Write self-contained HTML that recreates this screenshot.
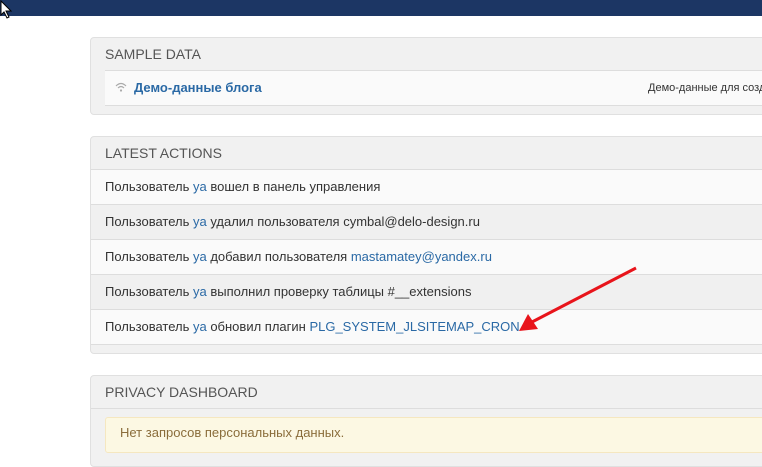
<!DOCTYPE html><html><head><meta charset="utf-8"><style>
body{margin:0;width:762px;height:447px;overflow:hidden;background:#fff;font-family:"Liberation Sans",Arial,sans-serif;position:relative}
.top{position:absolute;left:0;top:0;width:762px;height:16px;background:#1c3664}
.panel{position:absolute;left:90px;width:690px;background:#f1f1f1;border:1px solid #e0e0e0;border-radius:4px}
.h{font-size:14px;color:#555;padding:0 0 0 14px;height:32px;line-height:32px}
.row{height:34px;line-height:34px;border-top:1px solid #ddd;font-size:13px;color:#333;padding-left:14px}
.a{background:#fafafa}.b{background:#f0f0f0}
.l{color:#2a69a5}
</style></head><body>
<div class="top"></div>
<svg style="position:absolute;left:0;top:0" width="14" height="20"><path d="M1 1 L1 15 L4 12 L7 18 L9 17 L6 11 L11 11 Z" fill="#fff" stroke="#000" stroke-width="1"/></svg>
<div class="panel" style="top:37px;height:76px">
<div class="h">SAMPLE DATA</div>
<div style="margin-left:14px;height:34px;line-height:34px;background:#fafafa;border-top:1px solid #ddd;border-bottom:1px solid #ddd;font-size:13px;position:relative">
<svg style="position:absolute;left:10px;top:11px" width="12" height="10" viewBox="0 0 12 10"><path d="M1 4 Q6 -1 11 4 M3 6 Q6 3 9 6" stroke="#aaa" stroke-width="1.2" fill="none"/><circle cx="6" cy="8.5" r="1.1" fill="#aaa"/></svg>
<b class="l" style="margin-left:29px">Демо-данные блога</b>
<span style="position:absolute;left:543px;font-size:11px;color:#333">Демо-данные для созд</span></div>
</div>
<div class="panel" style="top:136px;height:216px">
<div class="h">LATEST ACTIONS</div>
<div class="row a">Пользователь <span class="l">ya</span> вошел в панель управления</div>
<div class="row b">Пользователь <span class="l">ya</span> удалил пользователя cymbal@delo-design.ru</div>
<div class="row a">Пользователь <span class="l">ya</span> добавил пользователя <span class="l">mastamatey@yandex.ru</span></div>
<div class="row b">Пользователь <span class="l">ya</span> выполнил проверку таблицы #__extensions</div>
<div class="row a" style="border-bottom:1px solid #ddd">Пользователь <span class="l">ya</span> обновил плагин <span class="l">PLG_SYSTEM_JLSITEMAP_CRON</span></div>
</div>
<div class="panel" style="top:375px;height:90px">
<div class="h">PRIVACY DASHBOARD</div>
<div style="border-top:1px solid #ddd;padding-top:8px"><div style="margin-left:14px;height:34px;line-height:30px;background:#fcf8e3;border:1px solid #f5e7c0;border-radius:3px;padding-left:14px;font-size:13px;color:#8a6d3b">Нет запросов персональных данных.</div></div>
</div>
<svg style="position:absolute;left:0;top:0" width="762" height="447"><line x1="636" y1="268" x2="532" y2="322" stroke="#e8141b" stroke-width="3"/><polygon points="519,331 528,314 538,329" fill="#e8141b"/></svg>
</body></html>
